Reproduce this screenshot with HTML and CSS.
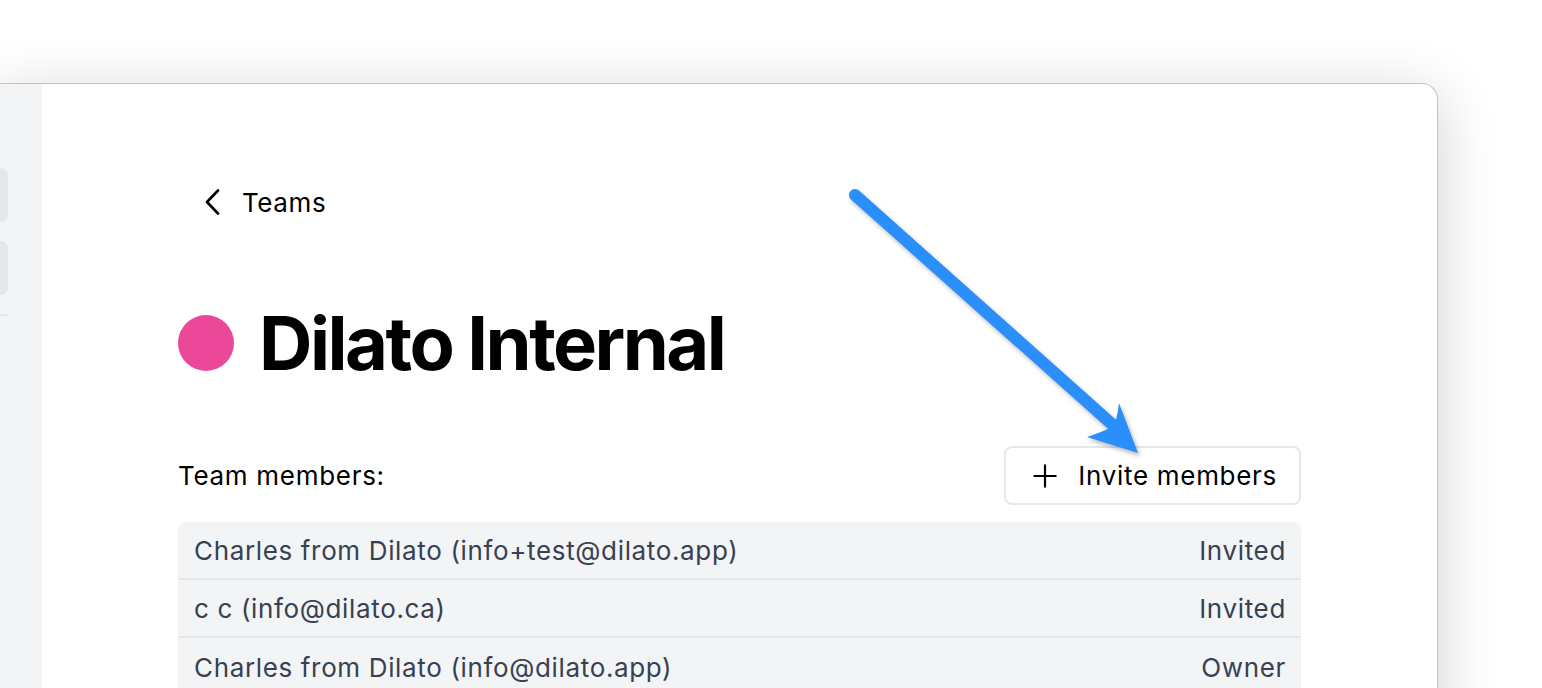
FILE: index.html
```html
<!DOCTYPE html>
<html lang="en">
<head>
<meta charset="utf-8">
<title>Dilato Internal</title>
<link rel="stylesheet" href="styles.css">
</head>
<body>
<div class="stage">
  <div class="window">
    <aside class="sidebar">
      <div class="side-item first"></div>
      <div class="side-item"></div>
      <div class="side-rule"></div>
    </aside>
    <main class="main">
      <a class="back" href="#">
        <svg class="chev" width="16" height="26" viewBox="0 0 16 26" aria-hidden="true"><path d="M14 1.5 L3 13 L14 24.5" fill="none" stroke="#000" stroke-width="2.6" stroke-linecap="round" stroke-linejoin="round"/></svg>
        <span>Teams</span>
      </a>
      <h1 class="title"><span class="dot"></span>Dilato Internal</h1>
      <div class="members-head">
        <span class="label">Team members:</span>
        <button class="invite">
          <svg width="24" height="24" viewBox="0 0 24 24" aria-hidden="true"><path d="M12 0.5 V23.5 M0.5 12 H23.5" stroke="#000" stroke-width="2.2"/></svg>
          <span>Invite members</span>
        </button>
      </div>
      <div class="table">
        <div class="row"><span>Charles from Dilato (info+test@dilato.app)</span><span>Invited</span></div>
        <div class="row"><span>c c (info@dilato.ca)</span><span>Invited</span></div>
        <div class="row"><span>Charles from Dilato (info@dilato.app)</span><span>Owner</span></div>
      </div>
    </main>
  </div>
  <svg class="arrow" width="1542" height="688" viewBox="0 0 1542 688" aria-hidden="true">
    <g class="arrow-g">
      <line x1="855" y1="195" x2="1114" y2="426" stroke="#2a8ffa" stroke-width="12" stroke-linecap="round"/>
      <path d="M1138 453 L1119 403 Q1117 422 1112 427 Q1102 432 1087 437 Z" fill="#2a8ffa"/>
    </g>
  </svg>
</div>
</body>
</html>
```

FILE: styles.css
```css
* { box-sizing: border-box; }
html, body { margin: 0; padding: 0; height: 100%; overflow: hidden; background: #ffffff; }
body { font-family: Inter, "Noto Sans", sans-serif; color: #000; }

.stage {
  position: relative;
  width: 1542px;
  height: 688px;
  padding-top: 83px;
  overflow: hidden;
}

.window {
  display: flex;
  width: 1439px;
  height: 700px;
  margin-left: -1px;
  background: #fff;
  border: 1px solid #c3c3c3;
  border-bottom: none;
  border-top-right-radius: 16px;
  box-shadow: 0 12px 60px rgba(0, 0, 0, 0.19);
  overflow: hidden;
}

.sidebar {
  width: 42px;
  flex: none;
  background: #f3f4f6;
  padding-top: 84px;
  display: flex;
  flex-direction: column;
  gap: 19px;
}
.side-item {
  width: 8px;
  height: 54px;
  background: #e5e7eb;
  border-radius: 0 7px 7px 0;
}
.side-rule {
  width: 8px;
  height: 2px;
  background: #e5e7eb;
}

.main {
  flex: 1;
  padding: 96px 0 0 136px;
  width: 1259px;
}
.main > * { width: 1123px; }

.back {
  display: flex;
  align-items: center;
  gap: 22px;
  color: #000;
  text-decoration: none;
  font-size: 26px;
  letter-spacing: 0.6px;
  height: 44px;
  padding-left: 26px;
}
.chev { flex: none; }

.title {
  display: flex;
  align-items: center;
  gap: 25px;
  margin: 74px 0 0;
  font-size: 74px;
  font-weight: 700;
  letter-spacing: -2.5px;
  height: 90px;
}
.dot {
  width: 56px;
  height: 56px;
  border-radius: 50%;
  background: #ec4899;
  flex: none;
}

.members-head {
  display: flex;
  justify-content: space-between;
  align-items: center;
  margin-top: 58px;
}
.label { font-size: 26px; letter-spacing: 0.7px; }
.invite {
  display: flex;
  align-items: center;
  gap: 21px;
  height: 59px;
  padding: 0 22px 0 27px;
  background: #fff;
  border: 2px solid #e5e7eb;
  border-radius: 8px;
  font-family: inherit;
  font-size: 26px;
  letter-spacing: 0.7px;
  color: #000;
}

.table {
  margin-top: 17px;
  background: #f3f4f6;
  border-radius: 8px 8px 0 0;
  overflow: hidden;
}
.row {
  display: flex;
  justify-content: space-between;
  align-items: center;
  height: 58px;
  padding: 0 15px 0 16px;
  font-size: 26px;
  letter-spacing: 0.65px;
  color: #374151;
  border-bottom: 2px solid #e5e7eb;
}
.row:last-child { border-bottom: none; }

.arrow {
  position: absolute;
  left: 0;
  top: 0;
  pointer-events: none;
}
.arrow-g { filter: drop-shadow(2px 3px 2px rgba(0, 0, 0, 0.28)); }
```
